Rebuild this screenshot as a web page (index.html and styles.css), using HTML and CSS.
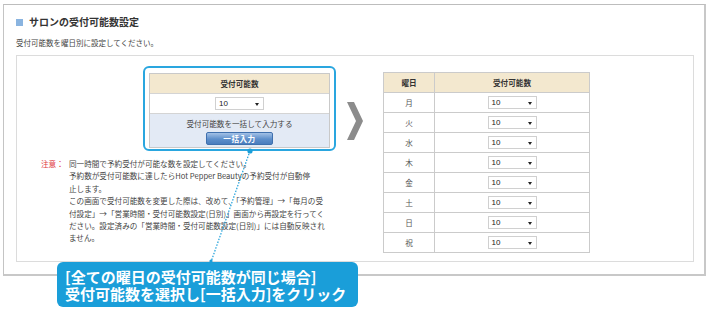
FILE: index.html
```html
<!DOCTYPE html>
<html lang="ja">
<head>
<meta charset="utf-8">
<link rel="stylesheet" href="styles.css">
</head>
<body>
<div class="page">
  <section class="outer">
    <h2 class="title"><span class="sq"></span>サロンの受付可能数設定</h2>
    <p class="lead">受付可能数を曜日別に設定してください。</p>
    <div class="inner">
      <div class="left">
        <div class="bulk">
          <div class="bulk-table">
            <div class="bulk-head">受付可能数</div>
            <div class="bulk-sel"><div class="sel">10<span class="tri"></span></div></div>
            <div class="bulk-foot">
              <div class="bulk-msg">受付可能数を一括して入力する</div>
              <div class="btn">一括入力</div>
            </div>
          </div>
        </div>
        <div class="note">
          <span class="note-label">注意：</span>
          <p class="note-text">同一時間で予約受付が可能な数を設定してください。<br>予約数が受付可能数に達したらHot Pepper Beautyの予約受付が自動停<br>止します。<br>この画面で受付可能数を変更した際は、改めて、「予約管理」→「毎月の受<br>付設定」→「営業時間・受付可能数設定(日別)」画面から再設定を行ってく<br>ださい。設定済みの「営業時間・受付可能数設定(日別)」には自動反映され<br>ません。</p>
        </div>
      </div>
      <svg class="arrow" width="16" height="38" viewBox="0 0 16 38"><polygon points="0,0 7,0 16,19 7,38 0,38 9,19" fill="#8c8c8c"/></svg>
      <table class="week">
        <thead>
          <tr><th class="c-day">曜日</th><th>受付可能数</th></tr>
        </thead>
        <tbody>
          <tr><td class="c-day">月</td><td><div class="sel">10<span class="tri"></span></div></td></tr>
          <tr><td class="c-day">火</td><td><div class="sel">10<span class="tri"></span></div></td></tr>
          <tr><td class="c-day">水</td><td><div class="sel">10<span class="tri"></span></div></td></tr>
          <tr><td class="c-day">木</td><td><div class="sel">10<span class="tri"></span></div></td></tr>
          <tr><td class="c-day">金</td><td><div class="sel">10<span class="tri"></span></div></td></tr>
          <tr><td class="c-day">土</td><td><div class="sel">10<span class="tri"></span></div></td></tr>
          <tr><td class="c-day">日</td><td><div class="sel">10<span class="tri"></span></div></td></tr>
          <tr><td class="c-day">祝</td><td><div class="sel">10<span class="tri"></span></div></td></tr>
        </tbody>
      </table>
    </div>
  </section>
  <svg class="leader" width="710" height="312" viewBox="0 0 710 312">
    <line x1="250" y1="151" x2="211" y2="262" stroke="#1a9ed9" stroke-width="1.2" stroke-dasharray="1.5 1.5"/>
    <circle cx="250" cy="151" r="2.6" fill="#1a9ed9"/>
    <circle cx="211" cy="261" r="1.6" fill="#1a9ed9"/>
  </svg>
  <div class="callout"><div class="callout-line">[全ての曜日の受付可能数が同じ場合]</div><div class="callout-line">受付可能数を選択し[一括入力]をクリック</div></div>
</div>
</body>
</html>
```
FILE: styles.css
```css
* { box-sizing: border-box; }
html, body { margin: 0; padding: 0; background: #fff; }
body {
  font-family: "Noto Sans CJK JP", "Noto Sans", sans-serif;
  color: #333;
}
.page {
  position: relative;
  width: 710px;
  height: 312px;
  padding: 4px 0 0 3px;
}
.outer {
  width: 703px;
  height: 272px;
  border-top: 1px solid #bdbdbd;
  border-left: 1px solid #c4c4c4;
  border-right: 2px solid #c8c8c8;
  border-bottom: 2px solid #c8c8c8;
  padding: 10px 10px 0 12px;
}
.title {
  margin: 0;
  font-size: 10px;
  line-height: 14px;
  font-weight: 700;
  color: #333;
  display: flex;
  align-items: center;
}
.sq {
  width: 7px;
  height: 7px;
  background: #8ab4e0;
  margin-right: 6px;
}
.lead {
  margin: 8px 0 0 0;
  font-size: 7.5px;
  line-height: 12px;
  color: #444;
}
.inner {
  margin-top: 6px;
  width: 678px;
  height: 207px;
  border: 1px solid #dcdcdc;
  display: flex;
  align-items: flex-start;
}
.left {
  width: 319px;
  flex: none;
}
.bulk {
  margin: 10px 0 0 126px;
  width: 193px;
  height: 85px;
  border: 2px solid #2aa6df;
  border-radius: 6px;
  padding: 5px 4px 0 4px;
}
.bulk-table {
  border: 1px solid #c9c9c9;
  font-size: 7.6px;
}
.bulk-head {
  height: 20px;
  background: #f3e8cf;
  font-weight: 700;
  text-align: center;
  line-height: 20px;
  border-bottom: 1px solid #d4d4d4;
}
.bulk-sel {
  height: 20px;
  display: flex;
  align-items: center;
  justify-content: center;
  border-bottom: 1px solid #d4d4d4;
}
.bulk-foot {
  height: 33px;
  background: #e3eaf5;
  display: flex;
  flex-direction: column;
  align-items: center;
  padding-top: 4px;
}
.bulk-msg {
  line-height: 11px;
  color: #444;
}
.btn {
  margin-top: 3px;
  width: 67px;
  height: 13px;
  border: 1px solid #3f70ae;
  border-radius: 2px;
  background: linear-gradient(#a3c1e6, #5d8fcb 55%, #4a7dbd);
  color: #fff;
  font-size: 7.6px;
  font-weight: 700;
  line-height: 11px;
  text-align: center;
  letter-spacing: 0.5px;
}
.sel {
  position: relative;
  width: 49px;
  height: 13px;
  border: 1px solid #d0d0d0;
  background: #fff;
  font-family: "Liberation Sans", Arial, sans-serif;
  font-size: 8px;
  line-height: 11px;
  color: #222;
  padding-left: 3px;
  text-align: left;
}
.tri {
  position: absolute;
  right: 4px;
  top: 5px;
  width: 0;
  height: 0;
  border-left: 2.5px solid transparent;
  border-right: 2.5px solid transparent;
  border-top: 3px solid #222;
}
.note {
  margin: 7px 0 0 24px;
  display: flex;
  font-size: 7.6px;
  line-height: 12.4px;
}
.note-label {
  color: #e0393c;
  width: 28px;
  flex: none;
}
.note-text {
  margin: 0;
  white-space: nowrap;
  color: #444;
}
.arrow {
  flex: none;
  margin: 46px 0 0 11px;
}
.week {
  margin: 16px 0 0 20px;
  width: 207px;
  border-collapse: collapse;
  font-size: 7.6px;
  color: #555;
}
.week th, .week td {
  border: 1px solid #cbcbcb;
  height: 20px;
  padding: 0;
  text-align: center;
  vertical-align: middle;
}
.week th {
  background: #f3e8cf;
  font-weight: 700;
  color: #333;
}
.week .c-day { width: 51px; }
.week td .sel { margin: 0 auto; }
.leader {
  position: absolute;
  left: 0;
  top: 0;
  pointer-events: none;
}
.callout {
  position: absolute;
  left: 57px;
  top: 262px;
  width: 301px;
  height: 45px;
  background: #1a9ed9;
  border-radius: 6px;
  color: #fff;
  font-size: 15px;
  font-weight: 700;
  padding: 6px 0 0 8px;
  white-space: nowrap;
}
.callout-line {
  line-height: 17px;
  height: 16.5px;
}
```
